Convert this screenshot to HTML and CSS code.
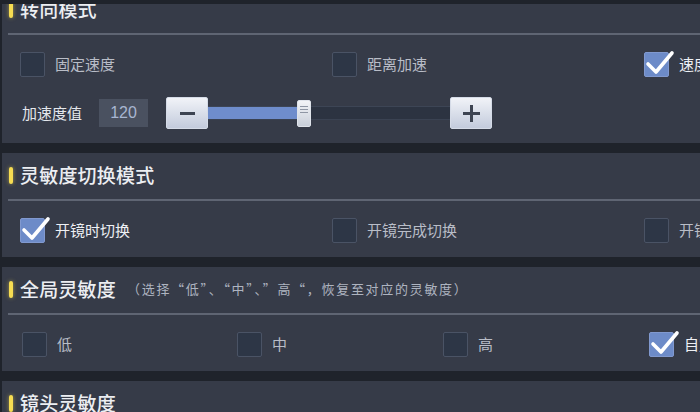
FILE: index.html
```html
<!DOCTYPE html>
<html lang="zh-CN">
<head>
<meta charset="utf-8">
<link rel="stylesheet" href="styles.css">
</head>
<body>
<div class="clip">
  <div class="list">
    <section class="panel">
      <div class="head"><span class="bar"></span><span class="title">转向模式</span></div>
      <div class="rule"></div>
      <div class="body">
        <div class="row cols3">
          <label class="opt"><span class="box"></span><span class="lbl">固定速度</span></label>
          <label class="opt"><span class="box"></span><span class="lbl">距离加速</span></label>
          <label class="opt on"><span class="box"><svg class="tick" viewBox="0 0 30 30"><polyline points="4,14 12,22 28,3"/></svg></span><span class="lbl">速度加速</span></label>
        </div>
        <div class="slider-row">
          <span class="slabel">加速度值</span>
          <span class="val">120</span>
          <div class="slider">
            <span class="btn"><span class="minus"></span></span>
            <div class="track">
              <div class="fill" style="width:38%"></div>
              <div class="thumb" style="left:36.8%"><i></i><i></i><i></i></div>
            </div>
            <span class="btn"><span class="plus"></span></span>
          </div>
        </div>
      </div>
    </section>

    <section class="panel">
      <div class="head"><span class="bar"></span><span class="title">灵敏度切换模式</span></div>
      <div class="rule"></div>
      <div class="body">
        <div class="row cols3">
          <label class="opt on"><span class="box"><svg class="tick" viewBox="0 0 30 30"><polyline points="4,14 12,22 28,3"/></svg></span><span class="lbl">开镜时切换</span></label>
          <label class="opt"><span class="box"></span><span class="lbl">开镜完成切换</span></label>
          <label class="opt"><span class="box"></span><span class="lbl">开镜前切换</span></label>
        </div>
      </div>
    </section>

    <section class="panel">
      <div class="head"><span class="bar"></span><span class="title">全局灵敏度</span><span class="sub">（选择“低”、“中”、”高“，恢复至对应的灵敏度）</span></div>
      <div class="rule"></div>
      <div class="body">
        <div class="row cols4">
          <label class="opt"><span class="box"></span><span class="lbl">低</span></label>
          <label class="opt"><span class="box"></span><span class="lbl">中</span></label>
          <label class="opt"><span class="box"></span><span class="lbl">高</span></label>
          <label class="opt on"><span class="box"><svg class="tick" viewBox="0 0 30 30"><polyline points="4,14 12,22 28,3"/></svg></span><span class="lbl">自定义</span></label>
        </div>
      </div>
    </section>

    <section class="panel">
      <div class="head"><span class="bar"></span><span class="title">镜头灵敏度</span></div>
      <div class="rule"></div>
    </section>
  </div>
</div>
</body>
</html>
```

FILE: styles.css
```css
* { box-sizing: border-box; }
html, body { margin: 0; padding: 0; }
body {
  width: 700px;
  height: 412px;
  overflow: hidden;
  background: #1f232b;
  font-family: "Noto Sans CJK SC", "Noto Sans", sans-serif;
}
.clip {
  margin-top: 4px;
  height: 408px;
  overflow: hidden;
}
.list {
  margin-top: -17px;
  display: flex;
  flex-direction: column;
  gap: 10px;
  padding-left: 2px;
}
.panel {
  background: #363b48;
  width: 720px;
}
.head {
  height: 46px;
  display: flex;
  align-items: center;
  padding-left: 7px;
  padding-bottom: 4px;
}
.bar {
  width: 4px;
  height: 17px;
  border-radius: 2px;
  background: #f6dc52;
  box-shadow: 0 0 4px rgba(250, 220, 80, 0.55);
  margin-right: 7px;
  margin-top: 2px;
}
.title {
  font-size: 19px;
  font-weight: 500;
  color: #eceef2;
  letter-spacing: 0.2px;
}
.sub {
  font-size: 13px;
  color: #aeb4c0;
  margin-left: 11px;
  letter-spacing: 1.7px;
}
.rule {
  height: 2px;
  margin-left: 6px;
  background: #5f6573;
}
.body {
  padding: 16px 0 14px 0;
}
.row {
  display: grid;
  height: 26px;
  align-items: center;
}
.cols3 {
  grid-template-columns: repeat(3, 312px);
  padding-left: 18px;
}
.cols4 {
  grid-template-columns: 215px 206px 206px 206px;
  padding-left: 20px;
}
.opt {
  display: flex;
  align-items: center;
  gap: 10px;
}
.box {
  position: relative;
  width: 25px;
  height: 25px;
  border-radius: 2px;
  background: #2d3646;
  border: 1px solid #4a5365;
  flex: none;
}
.opt.on .box {
  background: #6d8bc8;
  border-color: #8199cf;
}
.tick {
  position: absolute;
  left: -1px;
  top: -3px;
  width: 30px;
  height: 30px;
  overflow: visible;
}
.tick polyline {
  fill: none;
  stroke: #ffffff;
  stroke-width: 3.6;
  stroke-linecap: round;
  stroke-linejoin: round;
}
.lbl {
  font-size: 15px;
  color: #b9bdc7;
  white-space: nowrap;
  margin-top: -2px;
}
.opt.on .lbl { color: #eef0f4; }

.slider-row {
  display: flex;
  align-items: center;
  margin-top: 20px;
  padding-left: 20px;
  height: 32px;
}
.slabel {
  font-size: 15px;
  color: #e4e7ec;
  width: 77px;
  margin-top: -2px;
}
.val {
  width: 49px;
  height: 28px;
  background: #4a5160;
  color: #a8b6d2;
  font-family: "Liberation Sans", "Noto Sans", sans-serif;
  font-size: 16px;
  display: flex;
  align-items: center;
  justify-content: center;
  margin-right: 18px;
}
.slider {
  display: flex;
  align-items: center;
  height: 32px;
}
.btn {
  width: 42px;
  height: 32px;
  border-radius: 2px;
  background: linear-gradient(#f1f3f8, #c3cbdc);
  border: 1px solid #d5dbe7;
  display: flex;
  align-items: center;
  justify-content: center;
  position: relative;
}
.minus {
  width: 15px;
  height: 3px;
  background: #3d4452;
}
.plus {
  position: relative;
  width: 17px;
  height: 17px;
}
.plus::before, .plus::after {
  content: "";
  position: absolute;
  background: #3d4452;
}
.plus::before { left: 0; right: 0; top: 7px; height: 3px; }
.plus::after { top: 0; bottom: 0; left: 7px; width: 3px; }
.track {
  position: relative;
  width: 242px;
  height: 14px;
  background: #2c3341;
  border-top: 1px solid #3d4555;
  border-bottom: 1px solid #3a4252;
}
.fill {
  height: 100%;
  background: #6f8dcc;
}
.thumb {
  position: absolute;
  top: -7px;
  width: 14px;
  height: 27px;
  border-radius: 2px;
  background: linear-gradient(#f2f4f7, #c9cfda);
  border: 1px solid #dfe3ea;
  display: flex;
  flex-direction: column;
  align-items: center;
  gap: 2px;
  padding-top: 5px;
}
.thumb i {
  display: block;
  width: 8px;
  height: 1px;
  background: #8e96a4;
}
```
